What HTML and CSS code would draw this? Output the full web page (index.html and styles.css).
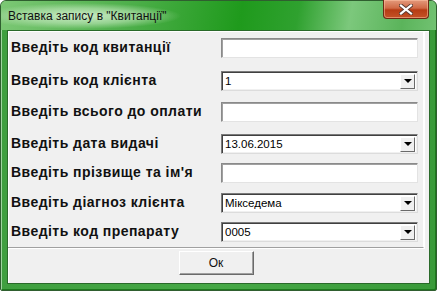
FILE: index.html
```html
<!DOCTYPE html>
<html lang="uk">
<head>
    <meta charset="utf-8">
    <title>Вставка запису</title>
    <link rel="stylesheet" href="styles.css">
</head>
<body>
    <div class="window">
        <div class="titlebar">
            <span class="title">Вставка запису в "Квитанції"</span>
            <button class="close-btn">
                <svg width="14" height="11" viewBox="0 0 14 11">
                    <path d="M2 1.5 L12 9.5 M12 1.5 L2 9.5" stroke="#5a3a30" stroke-width="4" stroke-linecap="square"/>
                    <path d="M2 1.5 L12 9.5 M12 1.5 L2 9.5" stroke="#ffffff" stroke-width="2.2" stroke-linecap="square"/>
                </svg>
            </button>
        </div>
        <div class="client">
            <div class="panel">
                <div class="row">
                    <label class="caption">Введіть код квитанції</label>
                    <div class="field"></div>
                </div>
                <div class="row">
                    <label class="caption">Введіть код клієнта</label>
                    <div class="field combo"><span class="value">1</span><span class="arrow"></span></div>
                </div>
                <div class="row">
                    <label class="caption">Введіть всього до оплати</label>
                    <div class="field"></div>
                </div>
                <div class="row">
                    <label class="caption">Введіть дата видачі</label>
                    <div class="field combo"><span class="value">13.06.2015</span><span class="arrow"></span></div>
                </div>
                <div class="row">
                    <label class="caption">Введіть прізвище та ім'я</label>
                    <div class="field"></div>
                </div>
                <div class="row">
                    <label class="caption">Введіть діагноз клієнта</label>
                    <div class="field combo"><span class="value">Мікседема</span><span class="arrow"></span></div>
                </div>
                <div class="row">
                    <label class="caption">Введіть код препарату</label>
                    <div class="field combo"><span class="value">0005</span><span class="arrow"></span></div>
                </div>
            </div>
            <div class="footer">
                <button class="ok-btn">Ок</button>
            </div>
        </div>
    </div>
</body>
</html>
```

FILE: styles.css
```css
body {
    margin: 0;
    background: #ffffff;
    font-family: "Liberation Sans", Arial, sans-serif;
}

.window {
    width: 437px;
    height: 291px;
    box-sizing: border-box;
    border: 1px solid #2f5f2f;
    border-radius: 6px 6px 2px 2px;
    background: linear-gradient(90deg, #3f9f3f 0%, #46a846 50%, #3a9a3a 100%);
    display: flex;
    flex-direction: column;
    padding: 0 6px 6px 6px;
    box-shadow: inset 1px 1px 0 #9fd49f, inset -1px -1px 0 #1d7a1d;
}

.titlebar {
    height: 29px;
    display: flex;
    align-items: flex-start;
    margin: 0 -6px;
    padding: 0 6px 0 7px;
    background:
        radial-gradient(ellipse 100px 13px at 80px 15px, rgba(215, 242, 210, 0.9) 0%, rgba(190, 230, 185, 0.6) 60%, rgba(190, 230, 185, 0) 100%),
        linear-gradient(100deg, #7cc875 0%, #4daf4a 30%, #1f9a1c 55%, #2fa12f 68%, #7cc87c 80%, #5bb45b 92%, #72c272 100%);
    border-radius: 5px 5px 0 0;
}

.title {
    margin-top: 8px;
    font-size: 12px;
    color: #111111;
    flex: 1;
}

.close-btn {
    width: 46px;
    height: 19px;
    margin-top: -1px;
    margin-right: 1px;
    border: 1px solid #6b2a14;
    border-top: none;
    border-radius: 0 0 4px 4px;
    background: linear-gradient(180deg, #e49a7c 0%, #d06a46 45%, #b63c14 55%, #c45226 100%);
    box-shadow: inset 0 0 0 1px rgba(255, 200, 170, 0.5);
    display: flex;
    align-items: center;
    justify-content: center;
    padding: 0;
}

.client {
    flex: 1;
    background: #f0f0f0;
    border: 1px solid #2a6a2a;
    box-shadow: inset 1px 1px 0 #ffffff;
    display: flex;
    flex-direction: column;
}

.panel {
    height: 217px;
    margin-right: 5px;
    box-sizing: border-box;
    padding-top: 7px;
    border-right: 1px solid #ffffff;
    border-bottom: 1px solid #a0a0a0;
    box-shadow: 1px 1px 0 #ffffff;
    display: grid;
    grid-template-columns: 213px 197px;
    grid-template-rows: 33px 31px 32px 29px 30px 29px 25px;
}

.row {
    display: contents;
}

.caption {
    padding-left: 3px;
    font-size: 14px;
    font-weight: bold;
    letter-spacing: 0.45px;
    color: #111111;
    line-height: 16px;
    margin-top: 1px;
}

.field {
    height: 20px;
    box-sizing: border-box;
    background: #ffffff;
    border: 1px solid;
    border-color: #8a8a8a #e3e3e3 #e3e3e3 #8a8a8a;
    box-shadow: inset 1px 1px 0 #a0a0a0;
    display: flex;
    align-items: center;
}

.combo {
    border-color: #7a7a7a #dcdcdc #dcdcdc #7a7a7a;
    box-shadow: inset 1px 1px 0 #404040, inset -1px -1px 0 #f0f0f0;
    padding: 2px;
}

.value {
    flex: 1;
    font-size: 11.5px;
    color: #000000;
    padding-left: 1px;
}

.arrow {
    width: 15px;
    height: 15px;
    box-sizing: border-box;
    background: #f0f0f0;
    border: 1px solid;
    border-color: #ffffff #6a6a6a #6a6a6a #ffffff;
    display: flex;
    align-items: center;
    justify-content: center;
}

.arrow::after {
    content: "";
    border-left: 4px solid transparent;
    border-right: 4px solid transparent;
    border-top: 4px solid #000000;
}

.footer {
    flex: 1;
    margin-right: 5px;
    display: flex;
    justify-content: center;
    align-items: flex-start;
    padding-top: 3px;
}

.ok-btn {
    width: 75px;
    height: 24px;
    background: #f0f0f0;
    border: 1px solid;
    border-color: #ffffff #6a6a6a #6a6a6a #ffffff;
    box-shadow: inset -1px -1px 0 #a0a0a0;
    font-family: "Liberation Sans", Arial, sans-serif;
    font-size: 12px;
    color: #111111;
    padding: 0;
}
```
